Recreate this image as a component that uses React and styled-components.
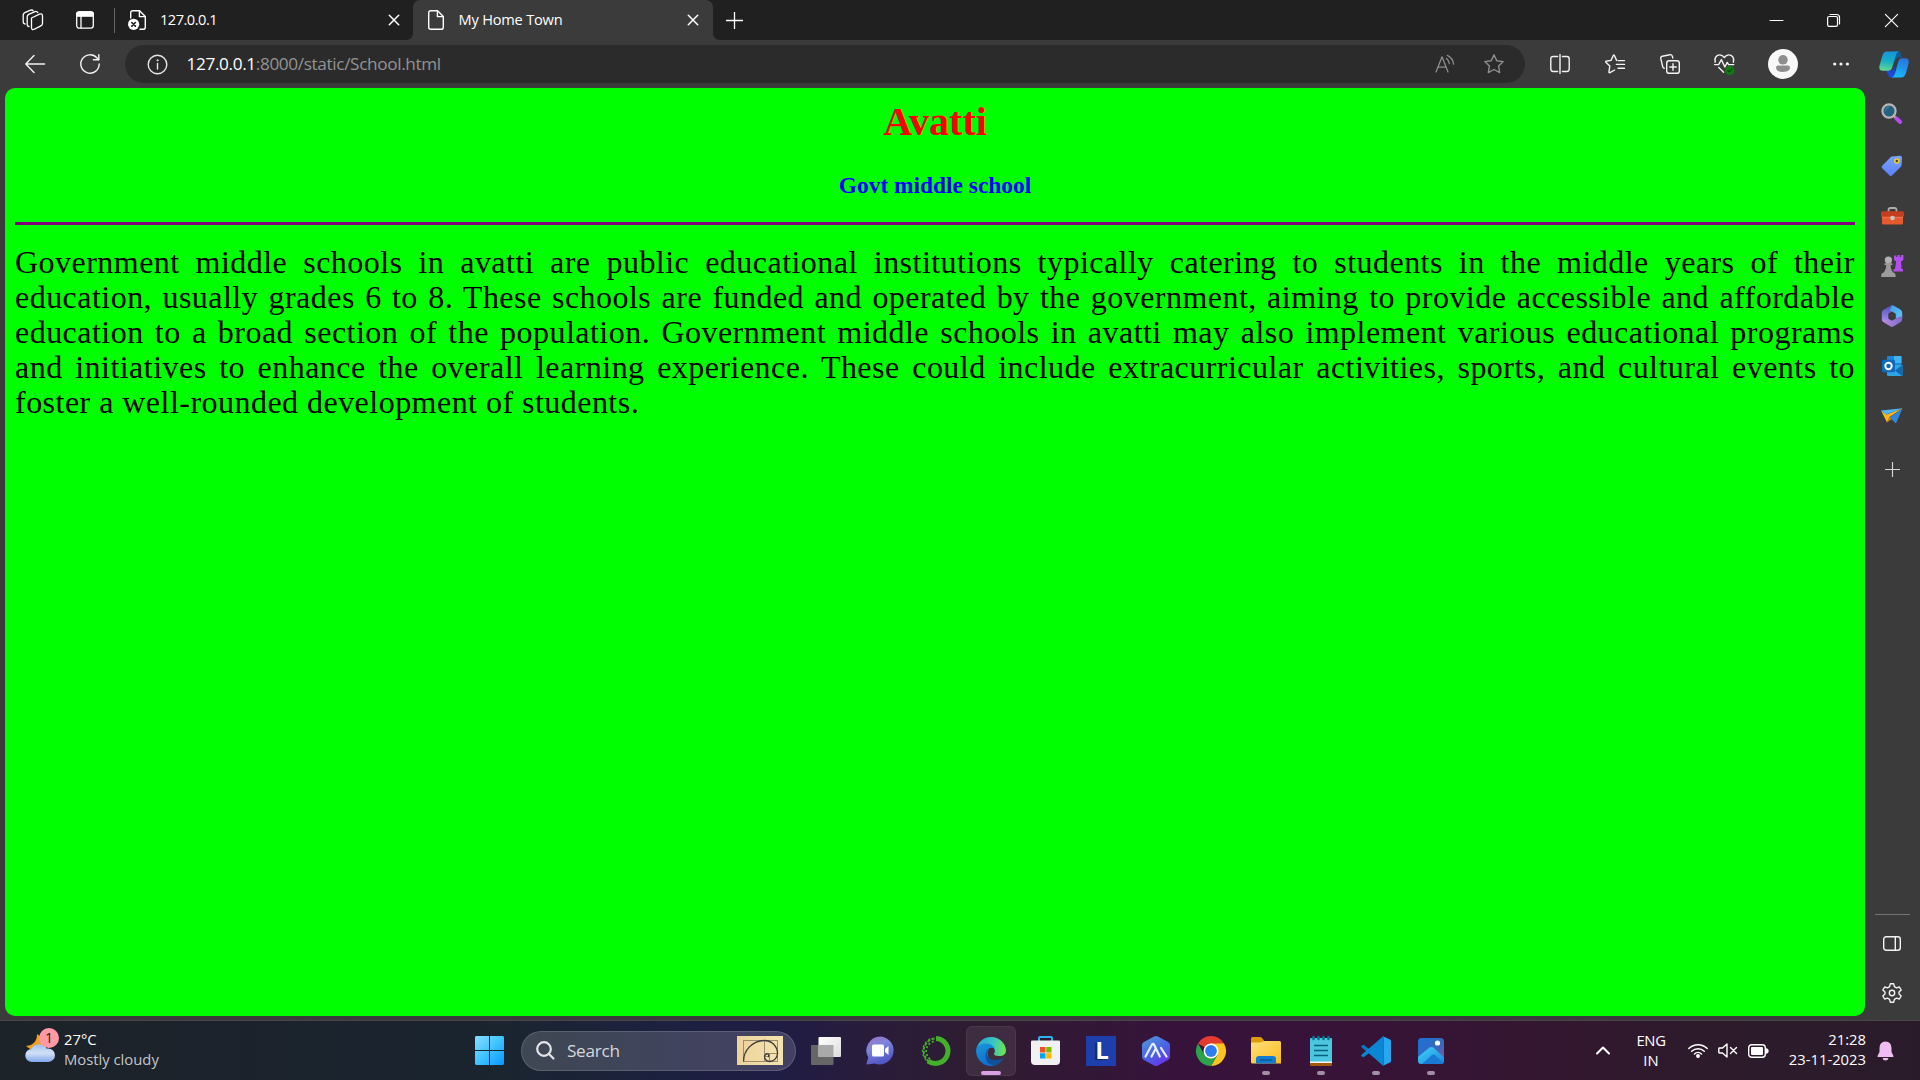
import React from "react";
import styled, { createGlobalStyle } from "styled-components";

const Global = createGlobalStyle`
  * { box-sizing: border-box; }
  html, body { margin: 0; padding: 0; background: #3b3b3b; }
  body { overflow: hidden; font-family: "Open Sans", sans-serif; }
  svg { display: block; flex: none; overflow: visible; }
`;

const Screen = styled.div`
  width: 1920px;
  height: 1080px;
  display: flex;
  flex-direction: column;
  background: #3b3b3b;
  overflow: hidden;
`;

/* ---------- tab strip ---------- */
const TabStrip = styled.header`
  height: 40px;
  flex: none;
  display: flex;
  align-items: center;
  background: #202020;
  color: #fff;
`;
const StripButton = styled.div`
  width: ${(p) => p.$w}px;
  height: 40px;
  display: flex;
  align-items: center;
  justify-content: center;
`;
const StripDivider = styled.i`
  width: 1px;
  height: 25px;
  margin-left: 9px;
  background: #666;
`;
const Tab = styled.div`
  width: ${(p) => p.$w}px;
  height: 40px;
  display: flex;
  align-items: center;
  padding: 0 ${(p) => p.$right}px 0 ${(p) => p.$left}px;
  background: ${(p) => (p.$active ? "#3b3b3b" : "transparent")};
  border-radius: ${(p) => (p.$active ? "7px 7px 0 0" : "0")};
  position: relative;
  ${(p) =>
    p.$active &&
    `
    &::before, &::after {
      content: "";
      position: absolute;
      bottom: 0;
      width: 6px;
      height: 6px;
    }
    &::before { left: -6px; background: radial-gradient(circle at 0 0, #202020 5.5px, #3b3b3b 6px); }
    &::after { right: -6px; background: radial-gradient(circle at 100% 0, #202020 5.5px, #3b3b3b 6px); }
  `}
`;
const TabTitle = styled.span`
  flex: 1;
  font-size: 14.6px;
  line-height: 20px;
  letter-spacing: ${(p) => p.$ls}px;
  margin-left: ${(p) => p.$gap}px;
  padding-bottom: 2px;
  white-space: nowrap;
`;
const Spacer = styled.div`
  flex: 1;
`;

/* ---------- toolbar ---------- */
const Toolbar = styled.nav`
  height: 48px;
  flex: none;
  display: flex;
  align-items: center;
  color: #f3f3f3;
`;
const ToolButton = styled.div`
  width: 55px;
  height: 48px;
  display: flex;
  align-items: center;
  justify-content: center;
`;
const AddressBar = styled.div`
  width: 1400px;
  height: 38px;
  margin: 0 7px 0 15px;
  border-radius: 19px;
  background: #2b2b2b;
  display: flex;
  align-items: center;
  padding: 0 21px 0 22px;
  color: #8d8d8d;
`;
const AddressIcons = styled.div`
  display: flex;
  gap: 29px;
`;
const Url = styled.span`
  flex: 1;
  margin-left: 18.5px;
  font-size: 17.2px;
  line-height: 24px;
  letter-spacing: -0.36px;
  color: #939393;
  white-space: nowrap;
  b { font-weight: 400; color: #fff; }
`;
const Avatar = styled.div`
  width: 30px;
  height: 30px;
  border-radius: 50%;
  background: #f8f8f8;
`;

/* ---------- page ---------- */
const Body = styled.main`
  height: 932px;
  flex: none;
  display: flex;
  padding-left: 5px;
`;
const Page = styled.article`
  width: 1860px;
  height: 928px;
  border-radius: 10px;
  background: #00ff00;
  padding: 11px 10px 0;
  font-family: "Liberation Serif", "Times New Roman", serif;
`;
const Title = styled.h1`
  margin: 0;
  font-size: 40px;
  line-height: 46px;
  text-align: center;
  color: #ff0000;
`;
const Subtitle = styled.h3`
  margin: 27px 0 0;
  font-size: 23.4px;
  line-height: 27px;
  text-align: center;
  color: #0000ff;
`;
const Rule = styled.hr`
  height: 3px;
  border: 0;
  margin: 23px 0 20px;
  background: #800080;
`;
const Paragraph = styled.p`
  margin: 0;
  font-family: Georgia, "Liberation Serif", serif;
  font-size: 32px;
  line-height: 35px;
  letter-spacing: 0.47px;
  color: #000;
`;
const Line = styled.span`
  display: block;
  white-space: nowrap;
  text-align-last: ${(p) => (p.$last ? "left" : "justify")};
`;

/* ---------- side bar ---------- */
const Side = styled.aside`
  width: 55px;
  height: 932px;
  display: flex;
  flex-direction: column;
  align-items: center;
  padding-right: 1px;
  color: #f3f3f3;
`;
const SideItem = styled.div`
  height: ${(p) => p.$h}px;
  display: flex;
  align-items: center;
  justify-content: center;
`;
const SideDivider = styled.i`
  width: 35px;
  height: 1px;
  background: #747474;
`;

/* ---------- task bar ---------- */
const Taskbar = styled.footer`
  height: 60px;
  flex: none;
  display: flex;
  align-items: center;
  border-top: 1px solid #4a454a;
  color: #fff;
  background: linear-gradient(90deg, #1c2328 0, #1b222c 250px, #1a2530 500px, #1c2140 680px, #201c44 780px, #2a1c3a 880px, #2e1c30 980px, #37133c 1180px, #371338 1350px, #33162f 1550px, #2d1b2c 1700px, #2a1b2a 1920px);
`;
const Weather = styled.div`
  width: 470px;
  padding-left: 25px;
  display: flex;
  align-items: center;
`;
const Stack = styled.div`
  display: flex;
  flex-direction: column;
  align-items: ${(p) => p.$align || "flex-start"};
  width: ${(p) => (p.$w ? p.$w + "px" : "auto")};
  margin-left: ${(p) => p.$ml || 0}px;
  padding-bottom: ${(p) => p.$pb || 0}px;
`;
const Small = styled.span`
  font-size: 14.8px;
  line-height: 20px;
  letter-spacing: ${(p) => p.$ls || 0}px;
  color: ${(p) => (p.$dim ? "#c4c6c9" : "#fff")};
  white-space: nowrap;
`;
const WeatherIcon = styled.div`
  position: relative;
  width: 30px;
  height: 36px;
`;
const Badge = styled.span`
  position: absolute;
  left: 14px;
  top: -5px;
  width: 20px;
  height: 20px;
  border-radius: 50%;
  background: #ff99a4;
  color: #222;
  font-size: 14px;
  line-height: 20px;
  text-align: center;
`;
const SearchBox = styled.div`
  width: 275px;
  height: 40px;
  border-radius: 20px;
  margin: 0 2px 0 12px;
  padding: 0 12px 0 14px;
  display: flex;
  align-items: center;
  background: rgba(255, 255, 255, 0.16);
  border: 1px solid rgba(255, 255, 255, 0.14);
`;
const SearchText = styled.span`
  flex: 1;
  margin-left: 12px;
  font-size: 17.2px;
  line-height: 24px;
  letter-spacing: ${(p) => p.$ls}px;
  color: #d6d7dc;
`;
const AppSlot = styled.div`
  width: 55px;
  height: 59px;
  display: flex;
  align-items: center;
  justify-content: center;
`;
const AppTile = styled.div`
  position: relative;
  width: 50px;
  height: 50px;
  border-radius: 6px;
  display: flex;
  align-items: center;
  justify-content: center;
  background: ${(p) => (p.$active ? "rgba(255,255,255,.08)" : "none")};
  box-shadow: ${(p) => (p.$active ? "inset 0 0 0 1px rgba(255,255,255,.06)" : "none")};
`;
const Indicator = styled.i`
  position: absolute;
  bottom: 1px;
  left: 50%;
  width: ${(p) => (p.$active ? 20 : 8)}px;
  height: 4px;
  margin-left: ${(p) => (p.$active ? -10 : -4)}px;
  border-radius: 2px;
  background: ${(p) => (p.$active ? "#d9a0e3" : "#a18fa5")};
`;
const TrayIcon = styled.div`
  width: ${(p) => p.$w}px;
  margin-right: ${(p) => p.$mr || 0}px;
  display: flex;
  justify-content: center;
`;

/* ---------- icons ---------- */
const S = ({ w = 20, h = w, vb, sw = 1.3, children }) => (
  <svg width={w} height={h} viewBox={vb || `0 0 ${w} ${h}`} fill="none" stroke="currentColor" strokeWidth={sw} strokeLinecap="round" strokeLinejoin="round">
    {children}
  </svg>
);
const Workspaces = () => (
  <S w={22}>
    <path d="M9.5 9 17.5 5.2Q20.5 4 20.5 7V14.2Q20.5 16 18.8 16.9L12.5 20.2Q9.5 21.5 9.5 18.6V9Z" />
    <path d="M7 17.5Q5.2 17.5 5.2 15V7.8Q5.2 6.2 6.7 5.4L13 2.6Q15 2 15.8 3.6" />
    <path d="M3 15Q1.2 14.8 1.2 12.5V6Q1.2 4.4 2.8 3.6L8.5 1.2Q10.5 .6 11.2 1.8" />
  </S>
);
const TabActions = () => (
  <S w={18}>
    <rect x="0.7" y="0.9" width="16.6" height="16.3" rx="2.6" />
    <path d="M.7 5.2V3Q.7 .8 3 .8H15Q17.3 .8 17.3 3V5.2Z" fill="currentColor" />
    <path d="M5 5V17" />
  </S>
);
const FileIcon = () => (
  <S w={16} h={20} sw={1.4}>
    <path d="M.7 2.8Q.7 .7 2.8 .7H9.6L15.3 6.4V17.2Q15.3 19.3 13.2 19.3H2.8Q.7 19.3 .7 17.2Z" />
    <path d="M9.4 1V6.6H15" />
  </S>
);
const FileError = () => (
  <S w={18} h={20} sw={1.4}>
    <path d="M2.7 8V2.8Q2.7 .7 4.8 .7H11.6L17.3 6.4V17.2Q17.3 19.3 15.2 19.3H12" />
    <path d="M11.4 1V6.6H17" />
    <circle cx="5.6" cy="14.3" r="5.6" fill="#fff" stroke="none" />
    <path d="M3.8 12.5 7.4 16.1M7.4 12.5 3.8 16.1" stroke="#202020" strokeWidth="1.6" />
  </S>
);
const Cross = ({ s = 10, sw = 1.5 }) => (
  <S w={s} vb="0 0 10 10" sw={sw}>
    <path d="M.3 .3 9.7 9.7M9.7 .3 .3 9.7" />
  </S>
);
const Plus = ({ s = 17, c }) => (
  <svg width={s} height={s} viewBox="0 0 17 17" fill="none" stroke={c || "currentColor"} strokeWidth="1.3">
    <path d="M8.5 0V17M0 8.5H17" />
  </svg>
);
const Minimize = () => (<S w={13} sw={1}><path d="M0 6.500H13" /></S>);
const Restore = () => (
  <S w={13} sw={1.2}>
    <rect x=".6" y="2.5" width="9.9" height="9.9" rx="1.6" />
    <path d="M3 .5H9.6Q12.5 .5 12.5 3.4V10" />
  </S>
);
const Back = () => (<S w={20} sw={1.4}><path d="M19.5 10H.8M9 1.6.8 10 9 18.4" /></S>);
const Refresh = () => (
  <S w={20} sw={1.4}>
    <path d="M19.2 10A9.2 9.2 0 1 1 16.8 3.8L18.6 5.7" />
    <path d="M18.8 .6V5.8H13.4" />
  </S>
);
const Info = () => (
  <S w={21} sw={1.4}>
    <circle cx="10.5" cy="10.5" r="9.3" stroke="#e6e6e6" />
    <path d="M10.5 9.4V15" stroke="#e6e6e6" />
    <circle cx="10.5" cy="6.3" r=".7" fill="#e6e6e6" stroke="#e6e6e6" strokeWidth=".6" />
  </S>
);
const ReadAloud = () => (
  <S w={20} sw={1.3}>
    <path d="M1 18 7 2.8 13 18M3 13.2H11" />
    <path d="M11.5 4.4Q14 6.4 14.4 9.6M12.4 1.4Q18 4.4 18.6 10.2" />
  </S>
);
const Star = () => (
  <S w={20} sw={1.4}>
    <path d="M10 .9 12.8 6.7 19.2 7.6 14.6 12.1 15.7 18.6 10 15.5 4.3 18.6 5.4 12.1 .8 7.6 7.2 6.7Z" />
  </S>
);
const Split = () => (
  <S w={20} sw={1.4}>
    <path d="M7.6 2.5H3.2Q.8 2.5 .8 4.9V15.1Q.8 17.5 3.2 17.5H7.6M12.4 2.5H16.8Q19.2 2.5 19.2 4.9V15.1Q19.2 17.5 16.8 17.5H12.4M10 .5V19.5" />
  </S>
);
const Favorites = () => (
  <S w={20} sw={1.4}>
    <path d="M11.6 6.4 9.3 1.2Q8.8 .8 8.4 1.2L6 6.4 .9 7.2Q.4 7.6 .8 8.2L4.8 12 3.9 18.2Q4.2 18.9 5 18.6L9.6 16" />
    <path d="M13 6.6H19.5M11.4 10.4H19.5M13 14.2H19.5" />
  </S>
);
const Collections = () => (
  <S w={20} sw={1.4}>
    <rect x="6.7" y="6.7" width="12.6" height="12.6" rx="2.4" />
    <path d="M13 9.8V16.2M9.8 13H16.2" />
    <path d="M4.3 14.2Q3 14 2.7 12.6L.8 4.7Q.4 2.8 2.3 2.2L9.8 .7Q11.8 .4 12.4 2.4L12.8 4" />
  </S>
);
const Health = () => (
  <S w={21} sw={1.4}>
    <path d="M1.2 8.2C-.2 3.4 3 .8 5.8 .9 8 1 9.4 2.3 10.3 3.6 11.2 2.3 12.6 1 14.8 .9 17.6 .8 20.8 3.4 19.4 8.2" />
    <path d="M.6 10.6H4.6L7.4 5.6 10.8 13 13.2 8.4 14.6 10.6H19.8M4.8 13.6 9.6 18.2" />
    <circle cx="15.7" cy="16.4" r="4.6" fill="#107c10" stroke="none" />
    <path d="M13.8 16.5 15.2 17.9 17.7 15.2" stroke="#064706" strokeWidth="1.1" />
  </S>
);
const Dots = () => (
  <svg width="16" height="4" viewBox="0 0 16 4" fill="#f3f3f3"><circle cx="1.7" cy="2" r="1.6" /><circle cx="8" cy="2" r="1.6" /><circle cx="14.4" cy="2" r="1.6" /></svg>
);
const Person = () => (
  <svg width="30" height="30" viewBox="0 0 30 30" fill="#8f8f8f"><circle cx="15" cy="10.8" r="4.8" /><path d="M10 16.6H20Q22 16.6 22 18.6C22 21.8 18.6 23 15 23S8 21.8 8 18.6Q8 16.6 10 16.6Z" /></svg>
);
const Copilot = () => (
  <svg width="30" height="27" viewBox="0 0 30 27">
    <defs>
      <linearGradient id="cpA" x1=".4" y1="0" x2=".3" y2="1"><stop offset="0" stopColor="#1695dc" /><stop offset=".5" stopColor="#19aec4" /><stop offset="1" stopColor="#65d98b" /></linearGradient>
      <linearGradient id="cpB" x1=".7" y1="0" x2=".4" y2="1"><stop offset="0" stopColor="#2b72dc" /><stop offset=".6" stopColor="#1a9df2" /><stop offset="1" stopColor="#1fb6fb" /></linearGradient>
    </defs>
    <path d="M15 .6H19Q21.4 .6 22 3L23 6.6H19.5Q17.5 6.6 16.8 8.6L15.500 13Z" fill="#0d5a97" />
    <path d="M7 19.5H12Q14 19.5 14.7 17L15.6 14 16 26.6H13Q10 26.6 9 23.8Z" fill="#1b49d8" />
    <path d="M8 .6H20.5Q18 .8 17 4L13 17Q12 19.8 9.5 19.8H4Q-.6 19.8 .4 15L3.4 4.5Q4.6 .6 8 .6Z" fill="url(#cpA)" />
    <path d="M22 26.6H12.5Q15 26 16 22.5L19.5 10Q20.5 7.2 23 7.2H26Q30.6 7.2 29.7 12L26.8 22.5Q25.5 26.6 22 26.6Z" fill="url(#cpB)" />
  </svg>
);
const SideSearch = () => (
  <svg width="22" height="22" viewBox="0 0 22 22">
    <path d="M13 13 15.5 15.5" stroke="#aaa" strokeWidth="2.5" />
    <path d="M15.4 15.6 19.2 19" stroke="#b84cf0" strokeWidth="4" strokeLinecap="round" />
    <circle cx="8" cy="8" r="6.6" fill="#246080" stroke="#b9b5b3" strokeWidth="2.2" />
    <path d="M4.5 7.5A4 4 0 0 1 8 4" stroke="#4d8fae" fill="none" />
  </svg>
);
const Tag = () => (
  <svg width="22" height="22" viewBox="0 0 22 22">
    <defs><linearGradient id="tg" x1="0" y1="0" x2="0" y2="1"><stop offset="0" stopColor="#7aa4ff" /><stop offset="1" stopColor="#5a80fa" /></linearGradient></defs>
    <path d="M11 1.4 19 .8Q21 .8 21 2.8L20.6 10Q20.5 11 19.6 12L11 20.4Q9.8 21.4 8.6 20.4L1.2 13.2Q0 12 1.2 10.8L9.4 2.4Q10 1.5 11 1.4Z" fill="url(#tg)" />
    <circle cx="15.8" cy="6" r="2" fill="#444" stroke="#f4cf20" strokeWidth="1.5" />
  </svg>
);
const Toolbox = () => (
  <svg width="23" height="18" viewBox="0 0 23 18">
    <path d="M7.5 5V3Q7.5 1 9.5 1H13.5Q15.5 1 15.5 3V5" fill="none" stroke="#b0aaa8" strokeWidth="1.8" />
    <rect x="1" y="6" width="21" height="11.6" rx="1.5" fill="#e55b2e" />
    <rect x="0" y="4.3" width="23" height="6" rx="1.5" fill="#c33d1e" />
    <path d="M1 10.3H22" stroke="#f27b4b" />
    <circle cx="11.5" cy="11" r="2.3" fill="#c9c4c4" />
  </svg>
);
const Chess = () => (
  <svg width="23" height="24" viewBox="0 0 23 24">
    <path d="M13 1.5V6L15.2 7.5 14 15H12.5V17.5H22V15H20.6L20 7.500 22.4 6V1H20V3H18.8V1H16.4V3H15.2V1.5Z" fill="#b34df0" />
    <circle cx="7.4" cy="6" r="3.6" fill="#b2b2b2" />
    <path d="M3.4 9.6Q7.4 8 11.4 9.6V11H9.6Q9.6 16 12.2 18.4Q14.6 19 14.6 21V23H.2V21Q.2 19 2.6 18.4Q5.2 16 5.2 11H3.4Z" fill="#9b9b9b" />
  </svg>
);
const M365 = () => (
  <svg width="22" height="22" viewBox="0 0 22 22">
    <defs>
      <linearGradient id="m3a" x1="0" y1="0" x2="0" y2="1"><stop offset="0" stopColor="#4c52b4" /><stop offset="1" stopColor="#a98cf0" /></linearGradient>
      <linearGradient id="m3b" x1="0" y1="0" x2="1" y2="1"><stop offset="0" stopColor="#3fa0ea" /><stop offset="1" stopColor="#62c4f4" /></linearGradient>
      <linearGradient id="m3c" x1="0" y1="0" x2="1" y2="0"><stop offset="0" stopColor="#c08ae0" /><stop offset="1" stopColor="#7a6bd0" /></linearGradient>
    </defs>
    <path d="M11.5 .2Q10.600 .1 9.700 .6L2.600 4.700Q.8 5.800 .8 8V15Q1.500 16.900 4 16.600L7.300 15V8.500L11 6.400Z" fill="url(#m3a)" />
    <path d="M9 4.800 11 .3Q12 .2 12.800 .7L19.400 4.600Q21.200 5.800 21.200 8V12.600L14.800 13V8.700L11 6.400 9.200 5.800Z" fill="url(#m3b)" />
    <path d="M21.200 11V14Q21.200 16.200 19.400 17.300L12.800 21.200Q11 22.200 9.200 21.200L2.600 17.300Q1 16.300 .8 14.600 2 16.200 4 15.600L7.300 13.700 11 15.800 14.800 13.500Z" fill="url(#m3c)" />
  </svg>
);
const Outlook = () => (
  <svg width="21" height="20" viewBox="0 0 21 20">
    <rect x="5" y="0" width="14.5" height="14" rx="1" fill="#1a86d8" />
    <path d="M12 0H18.5Q19.5 0 19.5 1V7H12Z" fill="#40b4f0" />
    <path d="M5 9H20.5V19Q20.5 20 19.5 20H6Q5 20 5 19Z" fill="#2ba5e8" />
    <path d="M20.5 9 13 14.5 20 20Q20.5 19.8 20.5 19Z" fill="#1467ae" />
    <rect x="0" y="3.8" width="13" height="12.5" rx="1.2" fill="#0f6cbd" />
    <circle cx="6.5" cy="10" r="3.2" fill="none" stroke="#fff" strokeWidth="1.9" />
  </svg>
);
const Plane = () => (
  <svg width="22" height="16" viewBox="0 0 22 16">
    <path d="M21.500 .3 15 15.500 8.500 9.500Z" fill="#2e86dd" />
    <path d="M0 2.500 6 14.500 8.500 9 21.500 .3 5.500 6.500Z" fill="#f8b51c" />
    <path d="M0 2.500 21.500 .3 5 6.500Z" fill="#4cb8f5" />
    <path d="M6 14.500 10.500 11 8.500 9Z" fill="#d98a10" />
  </svg>
);
const PanelIcon = () => (<S w={18} h={15} sw={1.4}><rect x=".7" y=".7" width="16.6" height="13.6" rx="2.5" /><path d="M12.3 1V14" /></S>);
const Gear = () => (
  <S w={20} sw={1.4}>
    <path d="M8.3 .8H11.7L12.4 3.7 14.5 4.9 17.4 4 19.2 7 17 9V11L19.2 13 17.4 16 14.5 15.1 12.4 16.3 11.7 19.2H8.3L7.6 16.3 5.5 15.1 2.6 16 .8 13 3 11V9L.8 7 2.6 4 5.5 4.9 7.6 3.7Z" />
    <circle cx="10" cy="10" r="2.7" />
  </S>
);
const WeatherArt = () => (
  <svg width="30" height="30" viewBox="0 0 30 30">
    <defs><linearGradient id="cl" x1="0" y1="0" x2="0" y2="1"><stop offset="0" stopColor="#9dc0f2" /><stop offset=".5" stopColor="#d2e0f7" /><stop offset="1" stopColor="#7fa8ea" /></linearGradient></defs>
    <path d="M12 1Q21 6 17 14 10 21 1 13 12 12 12 1Z" fill="#f2a024" />
    <path d="M7 29A6.500 6.500 0 0 1 6.500 16Q8 11.500 14 11.200 20 11.500 21.500 15.500H23A6.500 6.500 0 0 1 23.500 29Z" fill="url(#cl)" />
  </svg>
);
const Start = () => (
  <svg width="29" height="29" viewBox="0 0 29 29">
    <defs><linearGradient id="st" gradientUnits="userSpaceOnUse" x1="0" y1="0" x2="29" y2="29"><stop offset="0" stopColor="#85dfff" /><stop offset=".5" stopColor="#3fc4ff" /><stop offset="1" stopColor="#0a94ff" /></linearGradient></defs>
    <path d="M1 0H14V14H0V1ZM15 0H28L29 1V14H15ZM0 15H14V29H1L0 28ZM15 15H29V28L28 29H15Z" fill="url(#st)" />
  </svg>
);
const Lens = () => (<svg width="19" height="19" viewBox="0 0 19 19" fill="none" stroke="#e4e4e8" strokeWidth="2.2" strokeLinecap="round"><circle cx="8" cy="8" r="6.8" /><path d="M13 13 17.500 17.500" /></svg>);
const Spiral = () => (
  <svg width="46" height="29" viewBox="0 0 46 29">
    <defs><linearGradient id="sp"><stop offset="0" stopColor="#edd29b" /><stop offset="1" stopColor="#f5e4b0" /></linearGradient></defs>
    <rect width="46" height="29" fill="url(#sp)" />
    <g fill="none" stroke="#9c8c70"><rect x="6.5" y="4.5" width="34" height="21" /><path d="M27.5 4.5V25.5M27.5 17.5H40.5M32.5 17.5V25.5M27.5 20.5H32.5" /></g>
    <path d="M6.5 25.5A21 21 0 0 1 27.5 4.5 13 13 0 0 1 40.5 17.5 8 8 0 0 1 32.5 25.5 5 5 0 0 1 27.5 20.5 3 3 0 0 1 31 18 1.8 1.8 0 0 1 31 21" fill="none" stroke="#3d3a38" strokeWidth="1.3" />
  </svg>
);
const TaskView = () => (
  <svg width="30" height="28" viewBox="0 0 30 28">
    <defs><linearGradient id="tv" x1="0" y1="0" x2="1" y2="1"><stop offset="0" stopColor="#fff" /><stop offset="1" stopColor="#dcdcdc" /></linearGradient></defs>
    <rect x="0" y="8" width="22.5" height="20" rx="1" fill="#666" /><rect x="7.5" y="0" width="22.5" height="20" rx="1" fill="url(#tv)" /><rect x="7.5" y="8" width="15" height="12" fill="#a9a9a9" />
  </svg>
);
const Chat = () => (
  <svg width="29" height="29" viewBox="0 0 29 29">
    <defs><linearGradient id="ct" x1=".2" y1="0" x2=".6" y2="1"><stop offset="0" stopColor="#9c72c6" /><stop offset=".35" stopColor="#7d86dc" /><stop offset="1" stopColor="#4f52c4" /></linearGradient></defs>
    <path d="M14.5 .5A14 14 0 1 1 8.5 27.5L1 28.5Q.2 28.4 .5 27.5L2.3 21.5A14 14 0 0 1 14.5 .5Z" fill="url(#ct)" />
    <rect x="6" y="8.5" width="12" height="12" rx="1.5" fill="#fff" /><path d="M19 13 22.5 10V19L19 16Z" fill="#fff" />
  </svg>
);
const Anaconda = () => (
  <svg width="30" height="30" viewBox="0 0 30 30" fill="none" stroke="#43b02a">
    <path d="M15 2.5A12.5 12.5 0 1 1 7 25" strokeWidth="5" />
    <path d="M8 25.5A12.8 12.8 0 0 1 15 2.3" strokeWidth="2" strokeDasharray="3 1.5" />
    <path d="M9 23A10 10 0 0 1 14 5.2" strokeWidth="1.8" strokeDasharray="2 2" />
    <path d="M5 24A13.5 13.5 0 0 1 11 2.2" strokeWidth="1.4" strokeDasharray="2 2.5" />
  </svg>
);
const Edge = () => (
  <svg width="30" height="30" viewBox="0 0 30 30">
    <defs>
      <linearGradient id="eA" x1="0" y1=".4" x2="1" y2=".5"><stop offset="0" stopColor="#2aa5dc" /><stop offset=".55" stopColor="#36c4c4" /><stop offset="1" stopColor="#6fe64c" /></linearGradient>
      <linearGradient id="eB" x1="0" y1="0" x2=".3" y2="1"><stop offset="0" stopColor="#1a95d8" /><stop offset="1" stopColor="#0f70d0" /></linearGradient>
    </defs>
    <path d="M.4 13A15 15 0 0 1 30 14Q30 20 23.5 20 17.5 20 18 17.5 19.5 16 18.5 13 16 8 10 8 3.5 8 .4 13Z" fill="url(#eA)" />
    <path d="M.2 13Q3 7.5 10 7.5 16 7.5 18.6 12.5 12 10 11.5 17 12 27 22 28 19 30 15 30A15 15 0 0 1 .2 13Z" fill="url(#eB)" />
    <path d="M12.5 12.5Q9 17 12 21 17 26 27.5 22.5 24 28.5 18 29.5 10 28.5 9.5 20 9.5 14 12.5 12.5Z" fill="#12509a" />
  </svg>
);
const Store = () => (
  <svg width="29" height="29" viewBox="0 0 29 29">
    <path d="M8 5V2Q8 1 9 1H20Q21 1 21 2V5" fill="none" stroke="#2bb2ee" strokeWidth="2" />
    <path d="M1 4.5H28Q29 4.5 29 5.5V25Q29 29 25 29H4Q0 29 0 25V5.5Q0 4.5 1 4.5Z" fill="#f1f1f1" />
    <path d="M9 11H14.5V16.5H9Z" fill="#f25022" /><path d="M15.2 11H20.5V16.5H15.2Z" fill="#7fba00" /><path d="M9 17.2H14.5V22.5H9Z" fill="#00a4ef" /><path d="M15.2 17.2H20.5V22.5H15.2Z" fill="#ffb900" />
  </svg>
);
const LTile = styled.div`
  width: 30px;
  height: 30px;
  background: #1c3fac;
  color: #fff;
  font: 700 24px/28px "Open Sans", sans-serif;
  text-align: center;
  padding-left: 3px;
  text-shadow: -2px 1px 0 #0d2a58;
`;
const Hex = () => (
  <svg width="28" height="30" viewBox="0 0 28 30">
    <defs><linearGradient id="hx" x1=".2" y1="0" x2=".8" y2="1"><stop offset="0" stopColor="#4f94dd" /><stop offset=".5" stopColor="#4a64e4" /><stop offset="1" stopColor="#6a30ea" /></linearGradient></defs>
    <path d="M12 .5Q14 -.5 16 .5L26 6Q28 7 28 9V21Q28 23 26 24L16 29.500Q14 30.500 12 29.500L2 24Q0 23 0 21V9Q0 7 2 6Z" fill="url(#hx)" />
    <path d="M3.500 20.500 10 8.500Q11 7 12 8.500L17.800 20.500M9.500 20.500 13.500 13M19 12 24.500 20.500" fill="none" stroke="#e8edff" strokeWidth="2.2" strokeLinejoin="round" strokeLinecap="round" />
  </svg>
);
const Chrome = () => (
  <svg width="30" height="30" viewBox="0 0 30 30">
    <path d="M15 15 2 7.5A15 15 0 0 1 28 7.5Z" fill="#e33b2e" />
    <path d="M15 15 28 7.5A15 15 0 0 1 15 30L21.5 18.8Z" fill="#fcc31e" />
    <path d="M15 15 21.5 18.8 15 30A15 15 0 0 1 2 7.5L8.5 18.8Z" fill="#2ba24c" />
    <path d="M15 7.5H28L21 18Z" fill="#fcc31e" />
    <circle cx="15" cy="15" r="7.5" fill="#fff" /><circle cx="15" cy="15" r="5.9" fill="#2e7cf0" />
  </svg>
);
const Explorer = () => (
  <svg width="30" height="27" viewBox="0 0 30 27">
    <defs><linearGradient id="ex" x1="0" y1="0" x2="1" y2="1"><stop offset="0" stopColor="#ffe07c" /><stop offset="1" stopColor="#fabb1c" /></linearGradient></defs>
    <path d="M0 1.5Q0 0 1.5 0H9Q10 0 11 1L13 3.5V8H0Z" fill="#dd9d08" />
    <path d="M0 5.5H9Q10.5 5.5 11.5 4.8L13 4H28.5Q30 4 30 5.5V26.5H1.5Q0 26.5 0 25Z" fill="url(#ex)" />
    <path d="M5 26.5V22Q5 19 8 19H22Q25 19 25 22V26.5Z" fill="#127dd0" /><path d="M9 23H21" stroke="#0b4f92" strokeWidth="1.2" />
  </svg>
);
const Notepad = () => (
  <svg width="22" height="30" viewBox="0 0 22 30">
    <rect y="2" width="22" height="26" rx="1" fill="#4cc6df" /><rect y="25.5" width="22" height="1.5" fill="#f2f2f2" /><rect y="27" width="22" height="3" rx="1" fill="#a3560e" />
    <path d="M4 9.5H18M4 14.5H18M4 19.5H18" stroke="#0a5f7d" strokeWidth="1.6" />
    <path d="M3.5 1V3M8.5 1V3M13.5 1V3M18.5 1V3" stroke="#0c7290" strokeWidth="2.6" strokeLinecap="round" />
  </svg>
);
const VSCode = () => (
  <svg width="30" height="30" viewBox="0 0 30 30">
    <path d="M22 .2 8.2 13 2.6 8.7 .5 9.8Q-.2 10.5 .5 11.2L22.5 29.8V21.5Z" fill="#0a77c4" />
    <path d="M22 29.8 8.2 17 2.6 21.3 .5 20.2Q-.2 19.5 .5 18.8L22.5 .2V8.5Z" fill="#0a86d4" />
    <path d="M22 .2 29 3.5Q30 4 30 5V25Q30 26 29 26.5L22 29.8Q22.6 29 22.6 28V2Q22.6 1 22 .2Z" fill="#2aa5f0" />
  </svg>
);
const Photos = () => (
  <svg width="26" height="26" viewBox="0 0 26 26">
    <defs><linearGradient id="ph" x1="0" y1="0" x2="1" y2="1"><stop offset="0" stopColor="#1674d8" /><stop offset=".6" stopColor="#3c66b8" /><stop offset="1" stopColor="#a84f98" /></linearGradient><linearGradient id="pm" x1="0" y1="0" x2="1" y2="1"><stop offset="0" stopColor="#3fd6fa" /><stop offset="1" stopColor="#1a86de" /></linearGradient></defs>
    <rect width="26" height="26" rx="3.5" fill="url(#ph)" />
    <path d="M0 19 11.5 9.6Q13.5 8.3 15.5 9.6L26 19.5V22.5Q26 26 22.5 26H3.5Q0 26 0 22.5Z" fill="url(#pm)" />
    <path d="M4 26 14 17Q15.5 16 17 17L25 24.5Q24 26 22.5 26Z" fill="#1979d4" />
    <circle cx="19.5" cy="5" r="2.6" fill="#f4f8ff" />
  </svg>
);
const Chevron = () => (<S w={14} h={9} sw={2}><path d="M1 7.5 7 1.5 13 7.5" /></S>);
const Wifi = () => (
  <S w={20} h={15} sw={1.5}>
    <path d="M.8 5.5A13 13 0 0 1 19.2 5.5M3.7 8.3A9 9 0 0 1 16.3 8.3M6.5 11A5 5 0 0 1 13.5 11" /><circle cx="10" cy="13" r="1.2" fill="currentColor" />
  </S>
);
const Mute = () => (<S w={20} h={15} sw={1.4}><path d="M1.5 5H4.5L9 1V14L4.5 10H1.5Q.8 10 .8 9.3V5.7Q.8 5 1.5 5ZM12.5 4.5 18.5 10.5M18.5 4.5 12.5 10.5" /></S>);
const Battery = () => (
  <S w={21} h={14} sw={1.4}>
    <rect x=".7" y=".7" width="16.6" height="12.6" rx="3" /><rect x="3" y="3" width="12" height="8" rx="1" fill="currentColor" stroke="none" /><path d="M18.5 5V9Q20 8.5 20 7T18.5 5Z" fill="currentColor" />
  </S>
);
const Bell = () => (
  <svg width="17" height="20" viewBox="0 0 17 20" fill="#f0bdf2"><path d="M8.5 .5Q14.3 .8 14.5 7V11L16.5 15Q16.8 16 15.8 16H1.2Q.2 16 .5 15L2.5 11V7Q2.7 .8 8.5 .5ZM5.5 17H11.5Q11 19.5 8.5 19.5T5.5 17Z" /></svg>
);

const LINES = [
  "Government middle schools in avatti are public educational institutions typically catering to students in the middle years of their",
  "education, usually grades 6 to 8. These schools are funded and operated by the government, aiming to provide accessible and affordable",
  "education to a broad section of the population. Government middle schools in avatti may also implement various educational programs",
  "and initiatives to enhance the overall learning experience. These could include extracurricular activities, sports, and cultural events to",
  "foster a well-rounded development of students.",
];

const SIDE = [
  [52, <SideSearch />],
  [51, <Tag />],
  [50, <Toolbox />],
  [49, <Chess />],
  [51, <M365 />],
  [50, <Outlook />],
  [49, <Plane />],
  [59, <Plus s={15} c="#d6d6d6" />],
];

const APPS = [
  { icon: <TaskView /> },
  { icon: <Chat /> },
  { icon: <Anaconda /> },
  { icon: <Edge />, open: true, active: true },
  { icon: <Store /> },
  { icon: <LTile>L</LTile> },
  { icon: <Hex /> },
  { icon: <Chrome /> },
  { icon: <Explorer />, open: true },
  { icon: <Notepad />, open: true },
  { icon: <VSCode />, open: true },
  { icon: <Photos />, open: true },
];

export default function App() {
  return (
    <Screen>
      <Global />
      <TabStrip>
        <StripButton $w={65}><Workspaces /></StripButton>
        <StripButton $w={40}><TabActions /></StripButton>
        <StripDivider />
        <Tab $w={298} $left={13} $right={14}>
          <FileError />
          <TabTitle $gap={14} $ls={-0.5}>127.0.0.1</TabTitle>
          <Cross />
        </Tab>
        <Tab $w={300} $left={15} $right={15} $active>
          <FileIcon />
          <TabTitle $gap={14.500} $ls={-0.200}>My Home Town</TabTitle>
          <Cross />
        </Tab>
        <StripButton $w={43}><Plus /></StripButton>
        <Spacer />
        <StripButton $w={57}><Minimize /></StripButton>
        <StripButton $w={57}><Restore /></StripButton>
        <StripButton $w={58}><Cross s={13} sw={0.9} /></StripButton>
      </TabStrip>
      <Toolbar>
        <StripButton $w={70}><Back /></StripButton>
        <StripButton $w={40}><Refresh /></StripButton>
        <AddressBar>
          <Info />
          <Url><b>127.0.0.1</b>:8000/static/School.html</Url>
          <AddressIcons>
            <ReadAloud />
            <Star />
          </AddressIcons>
        </AddressBar>
        <ToolButton><Split /></ToolButton>
        <ToolButton><Favorites /></ToolButton>
        <ToolButton><Collections /></ToolButton>
        <ToolButton><Health /></ToolButton>
        <StripButton $w={62}><Avatar><Person /></Avatar></StripButton>
        <StripButton $w={53}><Dots /></StripButton>
        <StripButton $w={53}><Copilot /></StripButton>
      </Toolbar>
      <Body>
        <Page>
          <Title>Avatti</Title>
          <Subtitle>Govt middle school</Subtitle>
          <Rule />
          <Paragraph>
            {LINES.map((l, i) => (
              <Line key={l} $last={i === LINES.length - 1}>{l}</Line>
            ))}
          </Paragraph>
        </Page>
        <Side>
          {SIDE.map(([h, icon], i) => (
            <SideItem key={i} $h={h}>{icon}</SideItem>
          ))}
          <Spacer />
          <SideDivider />
          <SideItem $h={56}><PanelIcon /></SideItem>
          <SideItem $h={43}><Gear /></SideItem>
          <SideItem $h={6} />
        </Side>
      </Body>
      <Taskbar>
        <Weather>
          <WeatherIcon><WeatherArt /><Badge>1</Badge></WeatherIcon>
          <Stack $ml={9} $pb={4}>
            <Small>27°C</Small>
            <Small $dim>Mostly cloudy</Small>
          </Stack>
        </Weather>
        <StripButton $w={39}><Start /></StripButton>
        <SearchBox>
          <Lens />
          <SearchText $ls={-0.3}>Search</SearchText>
          <Spiral />
        </SearchBox>
        {APPS.map((a, i) => (
          <AppSlot key={i}>
            <AppTile $active={a.active}>
              {a.icon}
              {a.open && <Indicator $active={a.active} />}
            </AppTile>
          </AppSlot>
        ))}
        <Spacer />
        <TrayIcon $w={36}><Chevron /></TrayIcon>
        <Stack $w={60} $pb={2} $align="center">
          <Small $ls={-0.3}>ENG</Small>
          <Small>IN</Small>
        </Stack>
        <TrayIcon $w={34}><Wifi /></TrayIcon>
        <TrayIcon $w={26}><Mute /></TrayIcon>
        <TrayIcon $w={34}><Battery /></TrayIcon>
        <Stack $w={91} $pb={4} $align="flex-end">
          <Small>21:28</Small>
          <Small>23-11-2023</Small>
        </Stack>
        <TrayIcon $w={38} $mr={16}><Bell /></TrayIcon>
      </Taskbar>
    </Screen>
  );
}
